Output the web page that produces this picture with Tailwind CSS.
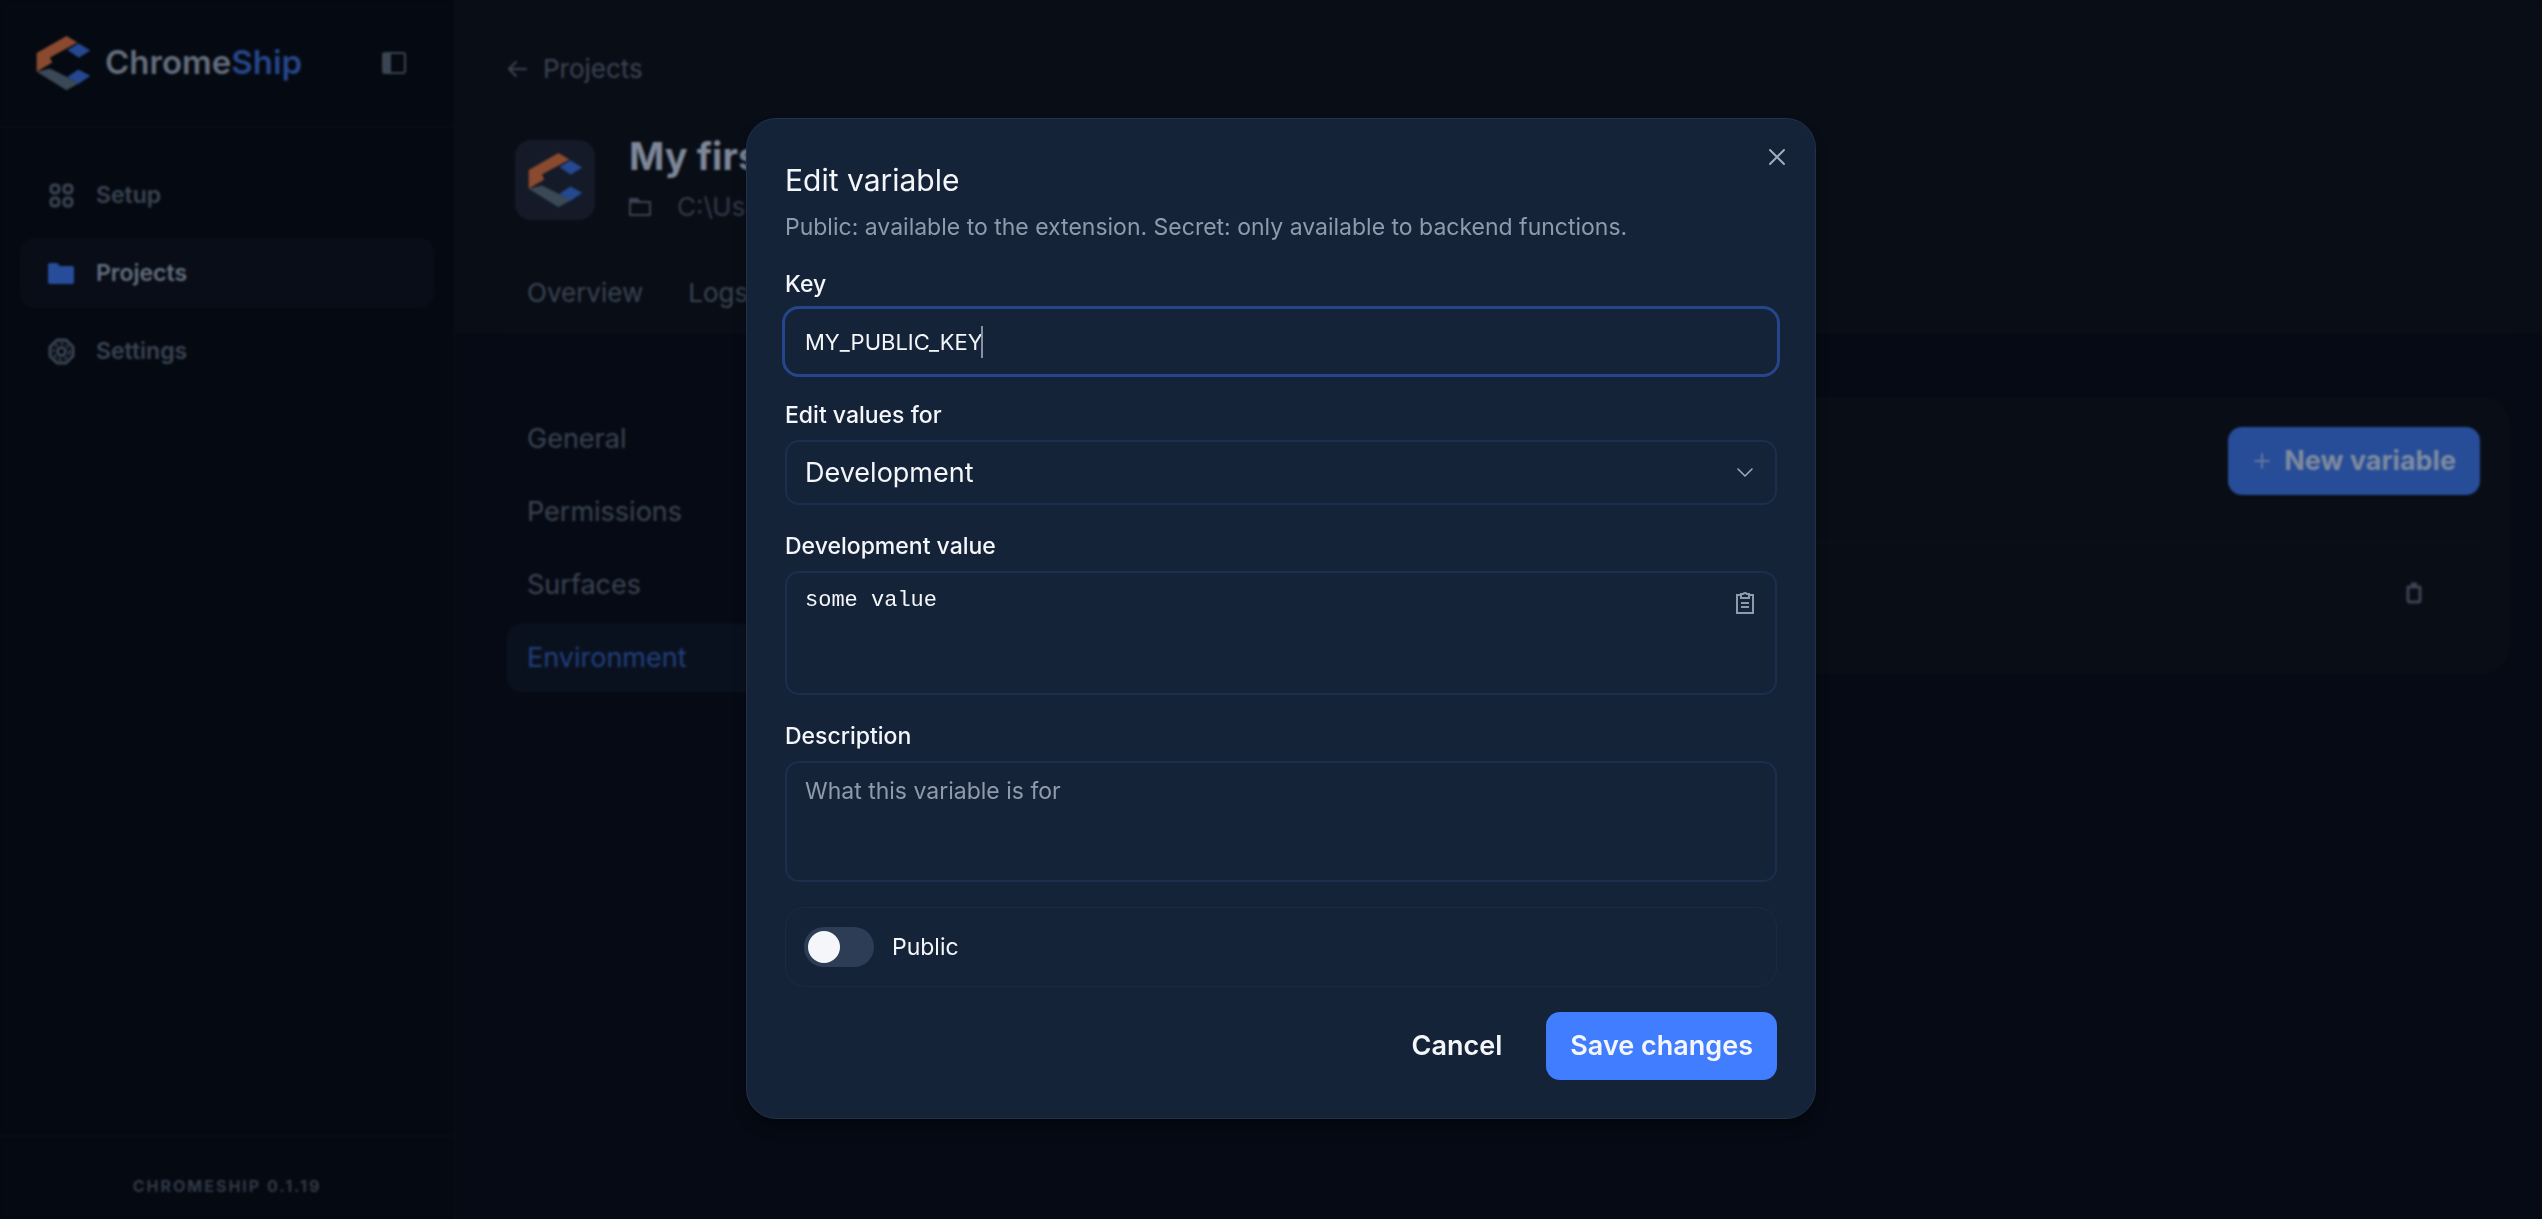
<!DOCTYPE html>
<html lang="en">
<head>
    <meta charset="UTF-8">
    <title>ChromeShip</title>
    <script src="https://cdn.jsdelivr.net/npm/@tailwindcss/browser@4"></script>
</head>
<body class="bg-[#060a14] font-['Inter',sans-serif] text-[#3a4452] min-h-screen flex overflow-hidden">

    <!-- logo mark, used in the sidebar and on the project card -->
    <svg class="hidden">
        <symbol id="mark" viewBox="108 105 166 167">
            <path fill="#254890" d="M203 149l33-20 36 22-35 22zM203 230l33-22 36 19-36 25z"/>
            <path fill="#3b4855" d="M110 215l40-10 52 26 34 19-36 21z"/>
            <path fill="#8a4a2f" d="M110 158l90-51 33 20-83 45 7 15-47 28z"/>
        </symbol>
    </svg>

    <aside class="w-[456px] h-screen shrink-0 flex flex-col bg-[#050911] border-r-2 border-[#080d18]">
        <div class="h-32 flex items-center pl-9 pr-12 border-b-2 border-[#080d18]">
            <svg class="w-[55px] h-[56px]"><use href="#mark"/></svg>
            <span class="ml-[14px] text-[33px] font-semibold text-[#646e7d]">Chrome<span class="text-[#25468b]">Ship</span></span>
            <button type="button" aria-label="Collapse sidebar" class="ml-auto">
                <svg class="w-6 h-6" viewBox="0 0 24 24" fill="none" stroke="currentColor" stroke-width="2">
                    <rect x="1" y="2" width="22" height="20" rx="2"/>
                    <path fill="currentColor" d="M2 3h6v18H2z"/>
                </svg>
            </button>
        </div>

        <nav class="flex-1 flex flex-col gap-2 px-5 pt-8 text-[23px] font-semibold">
            <a href="#" class="h-[70px] flex items-center gap-[21px] px-7 rounded-[14px]">
                <svg class="w-[27px] h-[27px]" viewBox="0 0 27 27" fill="none" stroke="currentColor" stroke-width="3">
                    <rect x="3" y="3" width="8" height="8" rx="3"/>
                    <rect x="16" y="3" width="8" height="8" rx="3"/>
                    <rect x="3" y="16" width="8" height="8" rx="3"/>
                    <rect x="16" y="16" width="8" height="8" rx="3"/>
                </svg>
                Setup
            </a>
            <a href="#" class="h-[70px] flex items-center gap-[21px] px-7 rounded-[14px] bg-[#080d17] text-[#646e7d]">
                <svg class="w-[27px] h-[27px]" viewBox="0 0 27 27" fill="#274c9a">
                    <path d="M2 3h7l3 3h12q2 0 2 2v14q0 2-2 2H2q-2 0-2-2V5q0-2 2-2z"/>
                </svg>
                Projects
            </a>
            <a href="#" class="h-[70px] flex items-center gap-[21px] px-7 rounded-[14px]">
                <svg class="w-[27px] h-[27px]" viewBox="0 0 27 27" fill="none" stroke="currentColor" stroke-width="3">
                    <path d="M9 2h9l7 7v9l-7 7H9l-7-7V9z" stroke-linejoin="round"/>
                    <circle cx="13.500" cy="13.500" r="8" stroke-width="2" stroke-dasharray="4 2"/>
                    <circle cx="13.500" cy="13.500" r="4"/>
                </svg>
                Settings
            </a>
        </nav>

        <div class="h-[84px] flex items-center justify-center pt-4 border-t-2 border-[#080d18] text-[16px] font-bold tracking-[2px] text-[#303946]">CHROMESHIP 0.1.19</div>
    </aside>

    <main class="flex-1 flex flex-col">
        <header class="bg-[#090d16] pl-[51px] pr-8">
            <a href="#" class="flex items-center gap-4 pt-[50px] text-[26px] leading-[38px]">
                <svg class="w-5 h-5" viewBox="0 0 20 20" fill="none" stroke="currentColor" stroke-width="2" stroke-linecap="round" stroke-linejoin="round">
                    <path d="M19 10H2M9 3l-7 7 7 7"/>
                </svg>
                Projects
            </a>
            <div class="flex gap-[34px] mt-[43px] pl-2">
                <div class="w-20 h-20 mt-[9px] rounded-2xl bg-[#141a27] flex items-center justify-center">
                    <svg class="w-[55px] h-[58px]"><use href="#mark"/></svg>
                </div>
                <div>
                    <h1 class="text-[38px] leading-[50px] font-bold text-[#7e8797]">My first project</h1>
                    <p class="flex items-center gap-[26px] text-[26px] leading-[52px] text-[#323b48]">
                        <svg class="w-[22px] h-[22px]" viewBox="0 0 22 22" fill="none" stroke="#3a4452" stroke-width="2" stroke-linejoin="round">
                            <path d="M1 3h7l3 3h10v13H1z"/>
                            <path fill="#3a4452" d="M1 3h7l2 3H1z"/>
                        </svg>
                        C:\Users
                    </p>
                </div>
            </div>
            <nav class="flex gap-[45px] h-[100px] pt-[41px] pl-5 text-[26px] leading-[38px] border-b-2 border-[#0b101b]">
                <a href="#">Overview</a>
                <a href="#">Logs</a>
            </nav>
        </header>

        <div class="flex-1 flex items-start gap-8 pl-[51px] pr-8 pt-16">
            <nav class="w-[320px] flex flex-col gap-[5px] pt-2 text-[27px]">
                <a href="#" class="h-[68px] flex items-center px-5 rounded-[14px]">General</a>
                <a href="#" class="h-[68px] flex items-center px-5 rounded-[14px]">Permissions</a>
                <a href="#" class="h-[68px] flex items-center px-5 rounded-[14px]">Surfaces</a>
                <a href="#" class="h-[68px] flex items-center px-5 rounded-[14px] bg-[#0a111e] text-[#203f7d]">Environment</a>
            </nav>
            <section class="flex-1 rounded-[28px] bg-[#090d16] p-[30px] pb-0">
                <div class="flex justify-end pb-[46px] border-b-2 border-[#0c111d]">
                    <button type="button" class="h-[68px] flex items-center gap-3 px-6 rounded-[14px] bg-[#274c98] text-[#7e8b9f] text-[27px] font-bold">
                        <svg class="w-5 h-5" viewBox="0 0 20 20" fill="none" stroke="#61779f" stroke-width="2" stroke-linecap="round">
                            <path d="M10 3v14M3 10h14"/>
                        </svg>
                        New variable
                    </button>
                </div>
                <div class="h-[131px] flex justify-end pt-[38px] pr-14">
                    <button type="button" aria-label="Delete variable" class="w-5 h-6">
                        <svg viewBox="0 0 20 24" fill="none" stroke="currentColor" stroke-width="3">
                            <path d="M4 6v13q0 2 2 2h8q2 0 2-2V6"/>
                            <path d="M3 6h14M7 3h6"/>
                        </svg>
                    </button>
                </div>
            </section>
        </div>
    </main>

    <!-- modal -->
    <div class="fixed inset-0 flex items-center justify-center pt-[18px] pl-5 backdrop-blur-[1px]">
        <form role="dialog" aria-labelledby="dialog-title" class="relative w-[1070px] flex flex-col p-[38px] rounded-[30px] border border-[#20314c] bg-[#152339] text-[#f4f6fa] text-[23px] leading-[32px] shadow-lg shadow-black/40">
            <button type="button" aria-label="Close" class="absolute top-6 right-6 p-1">
                <svg class="w-5 h-5" viewBox="0 0 20 20" fill="none" stroke="#a3acbb" stroke-width="2" stroke-linecap="round">
                    <path d="M3 3l14 14M17 3L3 17"/>
                </svg>
            </button>

            <h2 id="dialog-title" class="text-[30px] leading-[46px]">Edit variable</h2>
            <p class="mt-2 text-[#8f9aac]">Public: available to the extension. Secret: only available to backend functions.</p>

            <div class="mt-[25px] flex flex-col gap-[25px]">
                <div class="relative flex flex-col gap-[9px]">
                    <label for="key" class="font-medium">Key</label>
                    <input type="text" id="key" value="MY_PUBLIC_KEY" class="h-[65px] px-5 rounded-[14px] text-[22px] outline-3 outline-[#25468b] caret-transparent">
                    <!-- caret -->
                    <span class="absolute left-[196px] bottom-4 w-[2px] h-8 bg-[#8791a2]"></span>
                </div>

                <div class="relative flex flex-col gap-[9px]">
                    <label for="target" class="font-medium">Edit values for</label>
                    <select id="target" class="h-[65px] px-[18px] rounded-[14px] border-2 border-[#1c2e4b] appearance-none bg-[#152339] text-[27px]">
                        <option>Development</option>
                        <option>Production</option>
                    </select>
                    <svg class="absolute right-6 bottom-6 w-4 h-4 pointer-events-none" viewBox="0 0 16 16" fill="none" stroke="#a3acbb" stroke-width="1.5" stroke-linecap="round" stroke-linejoin="round">
                        <path d="M1 4l7 7 7-7"/>
                    </svg>
                </div>

                <div class="relative flex flex-col gap-[9px]">
                    <label for="value" class="font-medium">Development value</label>
                    <textarea id="value" class="h-[124px] px-[18px] py-3 rounded-[14px] border-2 border-[#1c2e4b] resize-none font-['Liberation_Mono',monospace] text-[22px]">some value</textarea>
                    <button type="button" aria-label="Paste" class="absolute right-[22px] top-[61px]">
                        <svg class="w-5 h-6" viewBox="0 0 20 24" fill="none" stroke="#8f9aac" stroke-width="2">
                            <path d="M6 4H2v18h16V4h-4"/>
                            <path d="M6 3h2q2-2 4 0h2v4H6zM6 12h8M6 16h8"/>
                        </svg>
                    </button>
                </div>

                <div class="flex flex-col gap-[9px]">
                    <label for="description" class="font-medium">Description</label>
                    <textarea id="description" placeholder="What this variable is for" class="h-[121px] px-[18px] py-3 rounded-[14px] border-2 border-[#1c2e4b] resize-none placeholder:text-[#8f9aac]"></textarea>
                </div>

                <div class="h-20 flex items-center gap-[18px] px-[18px] rounded-[20px] border border-[#1b2a44]">
                    <input type="checkbox" role="switch" id="public" class="appearance-none w-[70px] h-10 flex items-center px-1 rounded-full bg-[#2d3d56] before:w-8 before:h-8 before:rounded-full before:bg-[#f4f6fa]">
                    <label for="public">Public</label>
                </div>

                <div class="flex justify-end gap-5 text-[27px] font-semibold">
                    <button type="button" class="h-[68px] px-6 rounded-[14px]">Cancel</button>
                    <button type="submit" class="h-[68px] px-6 rounded-[14px] bg-[#407eff]">Save changes</button>
                </div>
            </div>
        </form>
    </div>

</body>
</html>
